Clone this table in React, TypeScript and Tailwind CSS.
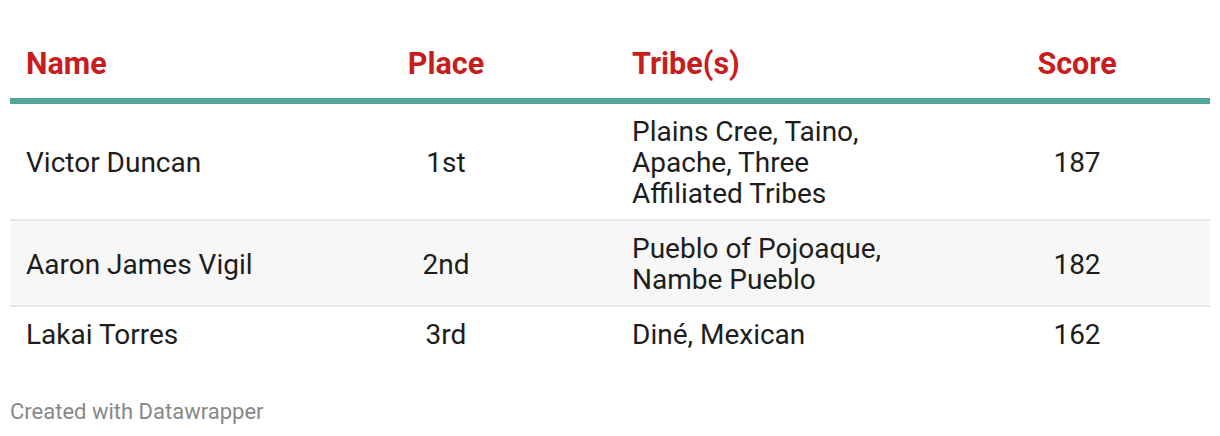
export default function App() {
  const rows = [
    { name: "Victor Duncan", place: "1st", tribes: ["Plains Cree, Taino,", "Apache, Three", "Affiliated Tribes"], score: "187", bg: "bg-white" },
    { name: "Aaron James Vigil", place: "2nd", tribes: ["Pueblo of Pojoaque,", "Nambe Pueblo"], score: "182", bg: "bg-[#f7f7f7]" },
    { name: "Lakai Torres", place: "3rd", tribes: ["Diné, Mexican"], score: "162", bg: "bg-white" },
  ];
  return (
    <div className="w-[1220px] h-[436px] bg-white px-[10px] pt-[40px]" style={{ fontFamily: "Roboto, 'Liberation Sans', sans-serif" }}>
      <div className="grid grid-cols-[266px_340px_328px_266px] border-b-[6px] border-[#52a699] text-[#c71e1d] font-bold text-[30.5px] leading-[48px] pb-[10px]">
        <div className="pl-[16px]">Name</div>
        <div className="text-center">Place</div>
        <div className="pl-[16px]">Tribe(s)</div>
        <div className="text-center">Score</div>
      </div>
      {rows.map((r, i) => (
        <div
          key={i}
          className={`grid grid-cols-[266px_340px_328px_266px] items-center ${r.bg} ${i < rows.length - 1 ? "border-b-2 border-[#e6e6e6]" : ""} text-[#1d1d1d] text-[28px] leading-[31px] pt-[12px] pb-[10px]`}
        >
          <div className="pl-[16px]">{r.name}</div>
          <div className="text-center">{r.place}</div>
          <div className="pl-[16px]">
            {r.tribes.map((t, j) => (
              <div key={j} className="whitespace-nowrap">{t}</div>
            ))}
          </div>
          <div className="text-center">{r.score}</div>
        </div>
      ))}
      <div className="mt-[40px] text-[22px] text-[#888888] leading-[24px]">Created with Datawrapper</div>
    </div>
  );
}
